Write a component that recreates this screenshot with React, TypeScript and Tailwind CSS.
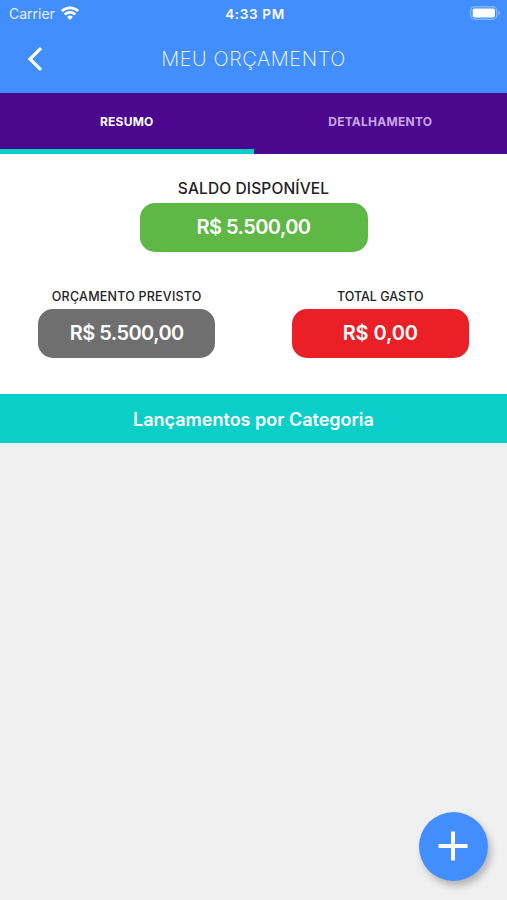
import { useState } from 'react';

const TABS = ['RESUMO', 'DETALHAMENTO'];

function WifiIcon() {
  return (
    <svg viewBox="0 0 18 14" className="-mt-0.5 w-[18px] h-3.5" fill="none" stroke="white" strokeWidth={2.7}>
      <path d="M.8 5.1a11.8 11.8 0 0 1 16.4 0" />
      <path d="M3.8 8.5a7.5 7.5 0 0 1 10.4 0" />
      <path d="M6.1 11a4.2 4.2 0 0 1 5.8 0L9 14Z" fill="white" stroke="none" />
    </svg>
  );
}

function BatteryIcon() {
  return (
    <svg viewBox="0 0 31 14" className="-mt-0.5 w-[31px] h-3.5" fill="none">
      <rect x=".75" y=".75" width="26" height="12.5" rx="4" stroke="white" strokeOpacity=".35" strokeWidth="1.3" />
      <rect x="2.7" y="2.6" width="22.2" height="8.8" rx="1.6" fill="white" />
      <path d="M28.4 4.8c2.2.8 2.2 3.6 0 4.4Z" fill="white" fillOpacity=".4" />
    </svg>
  );
}

type AmountProps = { label: string; value: string; boxClass: string; labelClass: string };

function Amount({ label, value, boxClass, labelClass }: AmountProps) {
  return (
    <div className="flex flex-col items-center">
      <p className={`whitespace-nowrap font-medium text-[#222] ${labelClass}`}>{label}</p>
      <div className={`flex h-[49px] items-center justify-center rounded-[15px] ${boxClass}`}>
        <span className="whitespace-nowrap text-[20px] leading-6 font-semibold text-white">{value}</span>
      </div>
    </div>
  );
}

export default function App() {
  const [active, setActive] = useState(0);

  return (
    <div className="relative flex h-[900px] w-[507px] flex-col overflow-hidden bg-[#f0f0f0] font-['Inter','Liberation_Sans',sans-serif]">
      {/* Cabeçalho */}
      <header className="h-[92.5px] shrink-0 bg-[#428eff] text-white">
        <div className="grid h-7 grid-cols-[1fr_auto_1fr] items-center pl-[9px] pr-[6px]">
          <div className="flex items-center gap-[6px]">
            <span className="text-[14px] leading-4 text-white/85">Carrier</span>
            <WifiIcon />
          </div>
          <span className="whitespace-nowrap text-center text-[13.5px] leading-4 font-semibold tracking-[0.65px]">4:33 PM</span>
          <div className="flex justify-end">
            <BatteryIcon />
          </div>
        </div>
        <div className="grid h-[62px] grid-cols-[60px_1fr_60px] items-center">
          <button aria-label="Voltar" className="flex justify-center pl-[9px]">
            <svg viewBox="0 0 16 26" className="h-[26px] w-4" fill="none" stroke="white" strokeWidth={3.2}>
              <path d="M14 2.2 3 13l11 10.8" />
            </svg>
          </button>
          <h1 className="whitespace-nowrap text-center text-[20px] leading-6 font-extralight tracking-[0.6px]">MEU ORÇAMENTO</h1>
        </div>
      </header>

      {/* Abas */}
      <nav className="flex h-[61px] shrink-0 bg-[#4b088f]">
        {TABS.map((tab, idx) => (
          <button
            key={tab}
            onClick={() => setActive(idx)}
            className={[
              'flex-1 border-b-[5px] pt-[2px] text-[12px] font-bold tracking-[0.25px]',
              active === idx ? 'border-[#0acfc8] text-white' : 'border-transparent text-[#c9a5e8]',
            ].join(' ')}
          >
            {tab}
          </button>
        ))}
      </nav>

      {/* Resumo */}
      <section className="h-[240.5px] shrink-0 bg-white pt-[25px]">
        <Amount
          label="SALDO DISPONÍVEL"
          value="R$ 5.500,00"
          labelClass="text-[15.5px] leading-5 pb-[4px] tracking-[0.13px]"
          boxClass="w-[228px] bg-[#5fb846] tracking-[-0.55px]"
        />
        <div className="mt-[35px] grid grid-cols-2">
          <Amount
            label="ORÇAMENTO PREVISTO"
            value="R$ 5.500,00"
            labelClass="text-[12.5px] leading-5 pb-[2px] tracking-[0.22px]"
            boxClass="w-[177px] bg-[#6f6f6f] tracking-[-0.55px]"
          />
          <Amount
            label="TOTAL GASTO"
            value="R$ 0,00"
            labelClass="text-[12.5px] leading-5 pb-[2px]"
            boxClass="w-[177px] bg-[#eb2027] tracking-[-0.1px]"
          />
        </div>
      </section>

      <div className="flex h-[49px] shrink-0 items-center justify-center bg-[#0acfc8] pt-[2px]">
        <h2 className="whitespace-nowrap text-[18px] leading-6 font-semibold text-white">Lançamentos por Categoria</h2>
      </div>

      {/* Novo lançamento */}
      <button
        aria-label="Adicionar"
        className="absolute right-[19.5px] bottom-[19.5px] flex size-[68.5px] items-center justify-center rounded-full bg-[#428eff] shadow-[3px_5px_7px_rgba(0,0,0,0.25)]"
      >
        <svg viewBox="0 0 30 30" className="size-[30px]" stroke="white" strokeWidth={4}>
          <path d="M15 .5v29M.5 15h29" />
        </svg>
      </button>
    </div>
  );
}
